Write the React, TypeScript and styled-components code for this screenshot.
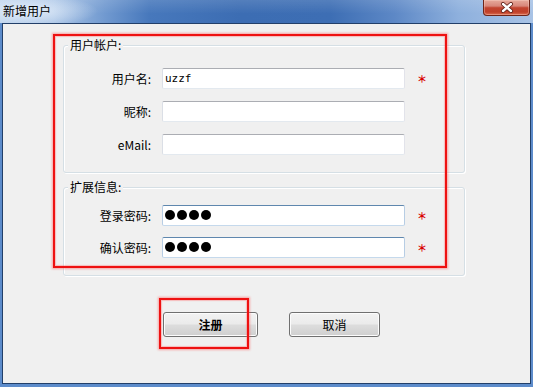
import React from 'react';
import styled, { createGlobalStyle } from 'styled-components';

const GlobalStyle = createGlobalStyle`
  html, body {
    margin: 0;
    padding: 0;
    background: #f0f0f0;
  }
  body {
    font-family: 'Noto Sans CJK SC', 'Liberation Sans', sans-serif;
    font-size: 12px;
    color: #000;
  }
`;

const Window = styled.div`
  position: relative;
  width: 533px;
  height: 387px;
  display: flex;
  flex-direction: column;
  background: #5d8ccb;
  overflow: hidden;
`;

const TitleBar = styled.div`
  height: 23px;
  flex: 0 0 23px;
  display: flex;
  justify-content: space-between;
  align-items: flex-start;
  padding: 0 3px 0 3px;
  box-sizing: border-box;
  background:
    radial-gradient(ellipse 70px 16px at 28px 11px, rgba(235, 243, 252, 0.85), rgba(235, 243, 252, 0) 100%),
    linear-gradient(to bottom, rgba(255, 255, 255, 0.12), rgba(255, 255, 255, 0) 60%),
    linear-gradient(
      to right,
      #bcd2ec 0%,
      #a9c4e6 10%,
      #6f98cf 20%,
      #4778bc 28%,
      #3c6db3 45%,
      #3d6eb4 62%,
      #5d88c6 74%,
      #8eb0dd 86%,
      #a8c3e6 100%
    );
`;

const Title = styled.div`
  font-size: 12px;
  line-height: 14px;
  padding-top: 4px;
  color: #000;
`;

const CloseButton = styled.div`
  width: 47px;
  height: 16px;
  box-sizing: border-box;
  border: 1px solid #6e2519;
  border-top: none;
  border-radius: 0 0 4px 4px;
  background: linear-gradient(
    to bottom,
    #e6aa9b 0%,
    #d8877a 40%,
    #c24430 52%,
    #c04029 80%,
    #dc6e52 100%
  );
  box-shadow: inset 0 0 0 1px rgba(255, 220, 210, 0.35);
  display: flex;
  align-items: center;
  justify-content: center;
`;

const Frame = styled.div`
  flex: 1;
  display: flex;
  padding: 0 2px 3px 2px;
`;

const Client = styled.div`
  flex: 1;
  display: flex;
  flex-direction: column;
  border: 1px solid #223f69;
  background: #f0f0f0;
  padding: 21px 0 0 60px;
`;

const GroupBox = styled.div<{ $padTop: number; $gap: number }>`
  position: relative;
  width: 402px;
  box-sizing: border-box;
  border: 1px solid #d5dfe5;
  border-radius: 3px;
  box-shadow: inset 1px 1px 0 #fff, 1px 1px 0 #fff;
  padding: ${p => p.$padTop}px 0 17px 0;
  display: flex;
  flex-direction: column;
  gap: ${p => p.$gap}px;

  & + & {
    margin-top: 14px;
  }
`;

const Caption = styled.span`
  position: absolute;
  top: -8px;
  left: 4px;
  padding: 0 2px;
  background: #f0f0f0;
  line-height: 14px;
  font-size: 12px;
`;

const Row = styled.div`
  display: grid;
  grid-template-columns: 87px 243px 20px;
  column-gap: 11px;
  align-items: center;
  height: 21px;
`;

const Label = styled.label`
  text-align: right;
  font-size: 12px;
  line-height: 21px;
  white-space: nowrap;
`;

const Field = styled.div<{ $active?: boolean }>`
  height: 21px;
  box-sizing: border-box;
  border: 1px solid;
  border-color: ${p =>
    p.$active ? '#5f87ae #b7cde4 #c5d9ec #b7cde4' : '#abadb3 #e2e3ea #e3e9ef #dbdfe6'};
  border-radius: 2px;
  background: #fff;
  display: flex;
  align-items: center;
  gap: 2px;
  padding: 0 2px;
  font-family: 'DejaVu Sans Mono', 'Liberation Mono', monospace;
  font-size: 11px;
`;

const Dot = styled.span`
  width: 10px;
  height: 10px;
  border-radius: 50%;
  background: #000;
  margin-top: -1px;
`;

const Required = styled.span`
  color: #d80000;
  font-size: 10px;
  font-weight: 700;
  line-height: 21px;
  padding-left: 1px;
  font-family: 'Noto Sans CJK SC', sans-serif;
`;

const ButtonRow = styled.div`
  display: flex;
  gap: 31px;
  margin: 36px 0 0 100px;
`;

const Button = styled.button<{ $w: number; $bold?: boolean }>`
  width: ${p => p.$w}px;
  height: 25px;
  box-sizing: border-box;
  border: 1px solid #707070;
  border-radius: 3px;
  background: linear-gradient(to bottom, #f2f2f2 0%, #ebebeb 48%, #dddddd 52%, #cfcfcf 100%);
  box-shadow: inset 0 0 0 1px #fcfcfc;
  font-family: 'Noto Sans CJK SC', sans-serif;
  font-size: 12px;
  font-weight: ${p => (p.$bold ? 700 : 400)};
  color: #000;
  padding: 0;
`;

const Mark = styled.div<{ $x: number; $y: number; $w: number; $h: number }>`
  position: absolute;
  left: ${p => p.$x}px;
  top: ${p => p.$y}px;
  width: ${p => p.$w}px;
  height: ${p => p.$h}px;
  box-sizing: border-box;
  border: 2px solid #ee1111;
  box-shadow: 0 0 2px 1px rgba(255, 70, 70, 0.45), inset 0 0 1px 1px rgba(255, 90, 90, 0.35);
  pointer-events: none;
`;

const Password: React.FC<{ count: number }> = ({ count }) => (
  <Field $active>
    {Array.from({ length: count }).map((_, i) => (
      <Dot key={i} />
    ))}
  </Field>
);

export default function App() {
  return (
    <>
      <GlobalStyle />
      <Window>
        <TitleBar>
          <Title>新增用户</Title>
          <CloseButton>
            <svg width='14' height='11' viewBox='0 0 14 11'>
              <path d='M3 2 L11 9 M11 2 L3 9' stroke='#5a1a12' strokeWidth='4' strokeLinecap='round' />
              <path d='M3 2 L11 9 M11 2 L3 9' stroke='#fff' strokeWidth='2.4' strokeLinecap='round' />
            </svg>
          </CloseButton>
        </TitleBar>
        <Frame>
          <Client>
            <GroupBox $padTop={22} $gap={12}>
              <Caption>用户帐户:</Caption>
              <Row>
                <Label>用户名:</Label>
                <Field>uzzf</Field>
                <Required>＊</Required>
              </Row>
              <Row>
                <Label>昵称:</Label>
                <Field />
              </Row>
              <Row>
                <Label>eMail:</Label>
                <Field />
              </Row>
            </GroupBox>
            <GroupBox $padTop={17} $gap={11}>
              <Caption>扩展信息:</Caption>
              <Row>
                <Label>登录密码:</Label>
                <Password count={4} />
                <Required>＊</Required>
              </Row>
              <Row>
                <Label>确认密码:</Label>
                <Password count={4} />
                <Required>＊</Required>
              </Row>
            </GroupBox>
            <ButtonRow>
              <Button $w={95} $bold>注册</Button>
              <Button $w={91}>取消</Button>
            </ButtonRow>
          </Client>
        </Frame>
        <Mark $x={53} $y={34} $w={394} $h={234} />
        <Mark $x={159} $y={298} $w={90} $h={51} />
      </Window>
    </>
  );
}
